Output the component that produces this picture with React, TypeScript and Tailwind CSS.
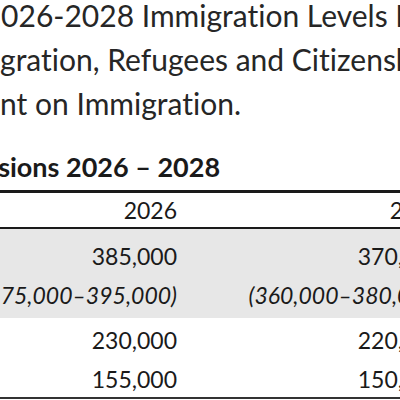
export default function App() {
  const rows = [
    {
      label: "Total",
      values: ["385,000", "370,000", "350,000"],
      ranges: ["(375,000–395,000)", "(360,000–380,000)", "(340,000–360,000)"],
    },
    { label: "Economic", values: ["230,000", "220,000", "210,000"] },
    { label: "Family", values: ["155,000", "150,000", "140,000"] },
  ]

  const cols = "grid grid-cols-[250px_235px_266px_266px]"

  return (
    <div className="w-[400px] h-[400px] overflow-hidden bg-white font-['Lato',sans-serif] text-[#222] [font-variant-ligatures:none]">
      {/* intro paragraph, left side is cut off in the screenshot */}
      <div className="-mt-[7px] text-[30px] leading-[44px] text-[#262626]">
        <div className="whitespace-nowrap -ml-[74px]">The 2026-2028 Immigration Levels Plan was tabled</div>
        <div className="whitespace-nowrap -ml-[99px]">of Immigration, Refugees and Citizenship Canada</div>
        <div className="whitespace-nowrap -ml-[113px]">Parliament on Immigration.</div>
      </div>

      <h2 className="mt-[24px] -ml-[77px] whitespace-nowrap text-[27px] font-bold leading-[36px] text-[#1a1a1a]">
        Admissions 2026 – 2028
      </h2>

      <div className="mt-[5px] -ml-[300px] w-[1100px] text-[23px] text-[#1a1a1a]">
        <div className={`${cols} border-t-[3px] border-b-2 border-[#1a1a1a] pt-[2px] pb-[2px] leading-[30px]`}>
          <div />
          <div className="pr-[8px] text-right">2026</div>
          <div className="pr-[8px] text-right">2027</div>
          <div className="pr-[8px] text-right">2028</div>
        </div>

        <div className={`${cols} bg-[#e7e7e7] pt-[8px] pb-[3px] leading-[39px]`}>
          <div className="pl-2 font-bold">{rows[0].label}</div>
          {rows[0].values.map((v, i) => (
            <div key={v} className="pr-[8px] text-right whitespace-nowrap">
              <div>{v}</div>
              <div className="italic">{rows[0].ranges![i]}</div>
            </div>
          ))}
        </div>

        <div className={`${cols} pt-[3px] leading-[39px]`}>
          <div className="pl-2">{rows[1].label}</div>
          {rows[1].values.map((v) => (
            <div key={v} className="pr-[8px] text-right">{v}</div>
          ))}
        </div>

        <div className={`${cols} border-b-2 border-[#333] pt-[1px] leading-[36px]`}>
          <div className="pl-2">{rows[2].label}</div>
          {rows[2].values.map((v) => (
            <div key={v} className="pr-[8px] text-right">{v}</div>
          ))}
        </div>
      </div>
    </div>
  )
}
